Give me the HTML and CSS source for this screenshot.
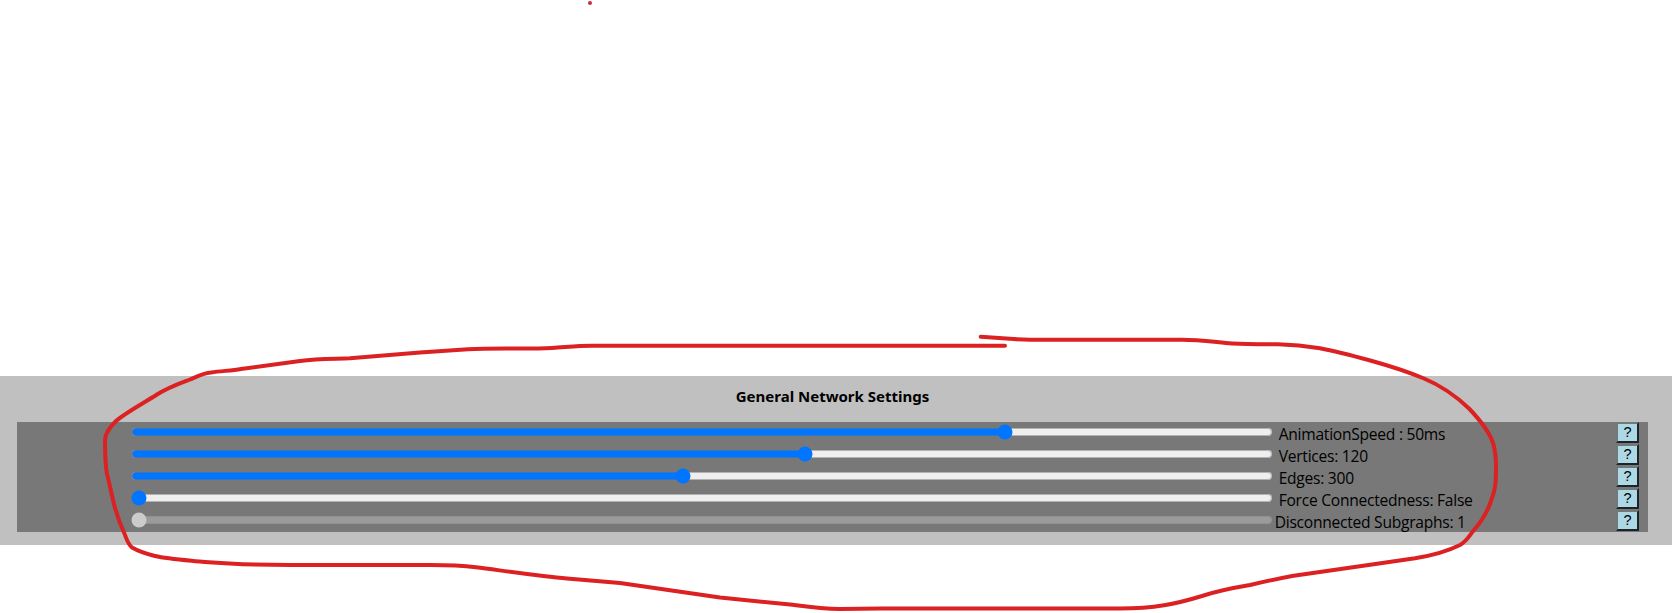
FILE: index.html
```
<!DOCTYPE html>
<html lang="en">
<head>
<meta charset="utf-8">
<title>General Network Settings</title>
<link rel="stylesheet" href="styles.css">
</head>
<body>
<section class="panel">
  <h2 class="title">General Network Settings</h2>
  <div class="settings">
    <div class="row"><input class="slider" type="range" min="0" max="1000" value="769"><label class="label speed">AnimationSpeed : 50ms</label><button class="help">?</button></div>
    <div class="row"><input class="slider" type="range" min="0" max="1000" value="592"><label class="label vertices">Vertices: 120</label><button class="help">?</button></div>
    <div class="row"><input class="slider" type="range" min="0" max="1000" value="483"><label class="label edges">Edges: 300</label><button class="help">?</button></div>
    <div class="row"><input class="slider" type="range" min="0" max="1000" value="0"><label class="label force">Force Connectedness: False</label><button class="help">?</button></div>
    <div class="row"><input class="slider" type="range" min="0" max="1000" value="0" disabled><label class="label subgraphs">Disconnected Subgraphs: 1</label><button class="help">?</button></div>
  </div>
</section>
<svg class="ink" width="1672" height="613" viewBox="0 0 1672 613">
  <circle class="dot" cx="590" cy="3" r="2"/>
  <path class="stroke" d="M980.7 336.8L1010 338.8Q1020 339.7 1030 339.7H1182C1200 339.700 1218 342.500 1232 343.500C1248 344.300 1262 344.200 1278 344.300C1293 344.700 1306 346 1320 348.200C1338 351.500 1354 356 1372 361C1390 366 1406 371 1424 378.500C1442 386 1457 397 1469 408.500C1480 420 1489 431 1493 443C1496 452 1496 458 1496 467C1496 480 1496 489 1491 501C1487 513 1481 522 1474 530C1469 536 1467 541 1460 545C1448 551 1432 555.500 1415 558.300C1374 564 1334 570 1292 576C1276 579 1263 582 1250 585C1232 588 1217 591 1202 596C1176 604 1154 608.500 1120 608.500H880L840 609C820 609 805 606.500 790 604.500L720 597.500L620 583C596 580.800 580 579.600 567 578.500C540 576 505 571 476 567.300C462 565.500 446 565 430 565H290C260 565 230 564 205 562C185 560 168 559 155 556C147 554 138 551 132 547.500C128 544 127 540 125 535C120 524 117 515 115 508C111 493 110 485 107 474C105 464 105 449 105 440C105 434 111 426 116 421C125 413 142 404 157 394.500C169 387 181 383 190 379.500C198 376 204 373 211 372.500C221 370.700 231 371 241 369L300 361C318 358.500 334 359 350 358.300L420 352.500L468 349.300C494 347.500 525 349.300 552 347.900C567 347 577 345.700 592 345.700H1005"/>
</svg>
</body>
</html>
```
FILE: styles.css
```
body {
  margin: 0;
  padding-top: 376px;
  height: 237px;
  overflow: hidden;
  background: #fff;
  color: #000;
  font: 15.6px/22px "Open Sans", "Noto Sans", sans-serif;
}
.panel {
  box-sizing: border-box;
  height: 169px;
  padding: 9px 24px 13px 17px;
  background: #c0c0c0;
}
.title {
  margin: 0 0 15px;
  height: 22px;
  text-align: center;
  font-family: "Noto Sans", sans-serif;
  font-size: 15px;
  line-height: 22px;
  letter-spacing: 0;
}
.settings { background: #787878; }
.row {
  display: flex;
  align-items: flex-start;
  height: 22px;
  padding: 0 9px 0 114px;
}
.slider {
  flex: none;
  width: 1141.7px;
  height: 16px;
  margin: 2px 2px 0 0;
}
.label {
  flex: 1;
  padding: 2px 0 0 4px;
  white-space: nowrap;
  line-height: 21px;
  letter-spacing: -0.26px;
}
.subgraphs { padding-left: 0; }
.help {
  box-sizing: border-box;
  width: 23px;
  height: 21px;
  padding: 0 0 1px;
  border: 2px solid;
  border-color: #737879 #1d2326 #1d2326 #737879;
  background: lightblue;
  color: #000;
  font: 14.5px/16px "Liberation Sans", Arial, sans-serif;
}
.ink {
  position: absolute;
  top: 0;
  left: 0;
  pointer-events: none;
}
.stroke {
  fill: none;
  stroke: #dc2123;
  stroke-width: 4;
  stroke-linecap: round;
  stroke-linejoin: round;
}
.dot { fill: #cf2b35; }
```
